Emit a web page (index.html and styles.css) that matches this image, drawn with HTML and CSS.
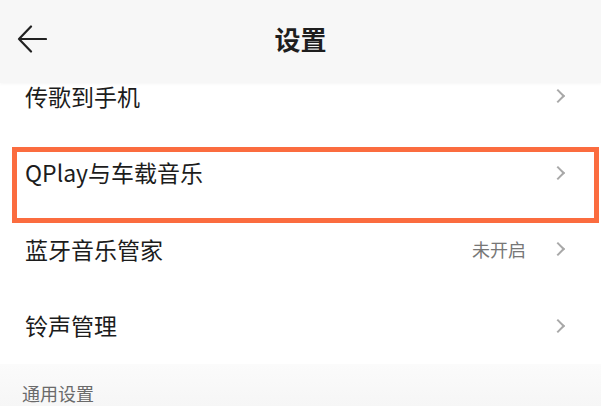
FILE: index.html
```html
<!DOCTYPE html>
<html lang="zh-CN">
<head>
<meta charset="utf-8">
<title>设置</title>
<link rel="stylesheet" href="styles.css">
</head>
<body>
<div class="page">
  <header class="topbar">
    <svg class="back" width="30" height="28" viewBox="0 0 30 28" aria-hidden="true">
      <path d="M29 14H2M14 1.5L2 14l12 12.5" fill="none" stroke="#222" stroke-width="2.2" stroke-linecap="round" stroke-linejoin="round"/>
    </svg>
    <h1 class="title">设置</h1>
  </header>
  <ul class="list">
    <li class="row first">
      <span class="label">传歌到手机</span>
      <span class="chev"></span>
    </li>
    <li class="row highlighted">
      <span class="label">QPlay与车载音乐</span>
      <span class="chev"></span>
    </li>
    <li class="row">
      <span class="label">蓝牙音乐管家</span>
      <span class="value">未开启</span>
      <span class="chev"></span>
    </li>
    <li class="row">
      <span class="label">铃声管理</span>
      <span class="chev"></span>
    </li>
  </ul>
  <section class="section">
    <span class="section-title">通用设置</span>
  </section>
</div>
</body>
</html>
```

FILE: styles.css
```css
* { box-sizing: border-box; }
html, body { margin: 0; padding: 0; }
body {
  width: 601px;
  height: 407px;
  overflow: hidden;
  background: #ffffff;
  font-family: "Noto Sans CJK SC", "Noto Sans", sans-serif;
  color: #222222;
}
.page { display: flex; flex-direction: column; }
.topbar {
  position: relative;
  z-index: 2;
  height: 83px;
  background: #f7f7f7;
  display: flex;
  align-items: center;
  justify-content: center;
  box-shadow: 0 1px 3px rgba(0,0,0,0.04);
}
.back {
  position: absolute;
  left: 17px;
  top: 25px;
}
.title {
  margin: 0;
  font-size: 26px;
  font-weight: 700;
  line-height: 1;
  color: #1e1e1e;
  padding-bottom: 6px;
}
.list {
  list-style: none;
  margin: -25px 0 0 0;
  padding: 0;
}
.row {
  position: relative;
  height: 76.5px;
  display: flex;
  align-items: center;
  padding: 0 36px 0 25px;
  background: #ffffff;
}
.label {
  flex: 1;
  font-size: 23px;
  line-height: 1;
  color: #1c1c1c;
}
.value {
  font-size: 18px;
  color: #777777;
  margin-right: 27px;
}
.chev {
  width: 10px;
  height: 10px;
  border-top: 2px solid #a8a8a8;
  border-right: 2px solid #a8a8a8;
  transform: rotate(45deg);
  margin-right: 2px;
}
.highlighted { z-index: 1; }
.highlighted::after {
  content: "";
  position: absolute;
  left: 12px;
  right: 2px;
  top: 12.5px;
  bottom: -12px;
  border: 5px solid #fb6c3f;
  pointer-events: none;
}
.section {
  flex: 1;
  height: 60px;
  background: linear-gradient(#fbfbfb, #f6f6f6);
  padding: 18px 0 0 22px;
}
.section-title {
  font-size: 18px;
  line-height: 1;
  color: #6a6a6a;
}
```
